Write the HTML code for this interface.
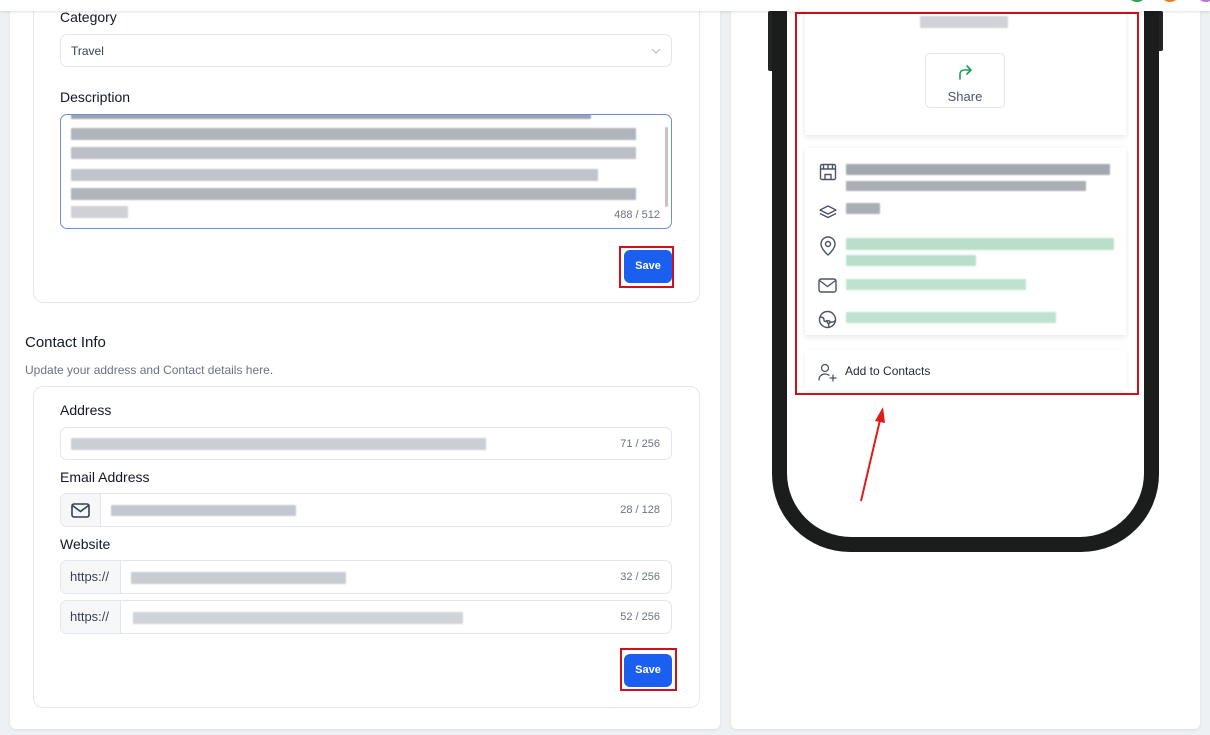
<!DOCTYPE html>
<html><head><meta charset="utf-8"><style>
*{box-sizing:border-box;margin:0;padding:0}
body{width:1210px;height:735px;overflow:hidden;background:#eef1f4;font-family:"Liberation Sans",sans-serif;position:relative;color:#111827}
.abs{position:absolute}
.blur{position:absolute;filter:blur(0.8px);border-radius:1px}
.lbl{position:absolute;font-size:14px;color:#111827}
.inp{position:absolute;left:60px;width:612px;border:1px solid #e3e6ea;border-radius:7px;background:#fff}
.cnt{position:absolute;right:11px;font-size:11px;color:#6b7280;top:50%;transform:translateY(-50%)}
.save{position:absolute;width:48px;height:33px;background:#1a5ff0;border-radius:6px;color:#fff;font-size:11px;font-weight:bold;text-align:center;line-height:33px}
.red{position:absolute;border:2px solid #d0111b}
.addon{position:absolute;left:0;top:0;bottom:0;background:#f6f7f9;border-right:1px solid #e3e6ea;border-radius:7px 0 0 7px;font-size:13px;color:#374151;line-height:32px;padding-left:9px}
svg.ic{position:absolute}
</style></head><body>
<div class="abs" style="left:0;top:0;width:1210px;height:11px;background:#fff;box-shadow:0 1px 3px rgba(0,0,0,.12);z-index:5"></div>
<div class="abs" style="left:1127px;top:-18px;width:20px;height:20px;border-radius:50%;background:#2ea44f;z-index:6"></div>
<div class="abs" style="left:1160px;top:-18px;width:20px;height:20px;border-radius:50%;background:#f47a20;z-index:6"></div>
<div class="abs" style="left:1196px;top:-18px;width:20px;height:20px;border-radius:50%;background:#b47ad6;z-index:6"></div>

<!-- left panel -->
<div class="abs" style="left:10px;top:0;width:710px;height:729px;background:#fff;border-radius:0 0 6px 6px;box-shadow:0 1px 3px rgba(0,0,0,.08)"></div>
<div class="abs" style="left:33px;top:-10px;width:667px;height:313px;border:1px solid #e5e7eb;border-radius:10px"></div>
<div class="lbl" style="left:60px;top:9px">Category</div>
<div class="inp" style="top:34px;height:33px"><span style="position:absolute;left:10px;top:9px;font-size:12px;color:#374151">Travel</span>
<svg class="ic" style="right:10px;top:11px" width="10" height="10" viewBox="0 0 10 10"><path d="M1 3l4 4 4-4" fill="none" stroke="#b8bcc4" stroke-width="1"/></svg></div>
<div class="lbl" style="left:60px;top:89px">Description</div>
<div class="inp" style="top:114px;height:115px;border-color:#6c8fd8;overflow:hidden">
<div class="blur" style="left:10px;top:-5px;width:520px;height:9px;background:#9ca3af"></div>
<div class="blur" style="left:10px;top:13px;width:565px;height:12px;background:#b0b4bb"></div>
<div class="blur" style="left:10px;top:32px;width:565px;height:12px;background:#bcc0c6"></div>
<div class="blur" style="left:10px;top:54px;width:527px;height:12px;background:#c0c3c9"></div>
<div class="blur" style="left:10px;top:73px;width:565px;height:12px;background:#b0b4bb"></div>
<div class="blur" style="left:10px;top:91px;width:57px;height:12px;background:#cfd1d5"></div>
<div class="abs" style="right:3px;top:12px;width:3px;height:80px;background:#c4c4c4;border-radius:2px"></div>
<span style="position:absolute;right:11px;top:94px;font-size:11px;color:#6b7280">488 / 512</span>
</div>
<div class="save" style="left:624px;top:250px">Save</div>
<div class="red" style="left:619px;top:246px;width:55px;height:42px"></div>

<div class="abs" style="left:25px;top:334px;font-size:15px;color:#111827">Contact Info</div>
<div class="abs" style="left:25px;top:363px;font-size:12px;color:#6b7280">Update your address and Contact details here.</div>
<div class="abs" style="left:33px;top:386px;width:667px;height:322px;border:1px solid #e5e7eb;border-radius:10px"></div>
<div class="lbl" style="left:60px;top:402px">Address</div>
<div class="inp" style="top:427px;height:33px"><div class="blur" style="left:10px;top:10px;width:415px;height:12px;background:#cbced3"></div><span class="cnt">71 / 256</span></div>
<div class="lbl" style="left:60px;top:469px">Email Address</div>
<div class="inp" style="top:493px;height:34px"><div class="addon" style="width:40px"></div>
<svg class="ic" style="left:10px;top:9px" width="19" height="15" viewBox="0 0 19 15"><rect x="1" y="1" width="17" height="13" rx="2" fill="none" stroke="#374151" stroke-width="1.6"/><path d="M1.5 2.5l8 6 8-6" fill="none" stroke="#374151" stroke-width="1.6"/></svg>
<div class="blur" style="left:50px;top:11px;width:185px;height:11px;background:#c4c7cd"></div><span class="cnt">28 / 128</span></div>
<div class="lbl" style="left:60px;top:536px">Website</div>
<div class="inp" style="top:560px;height:34px"><div class="addon" style="width:60px">https://</div><div class="blur" style="left:70px;top:11px;width:215px;height:12px;background:#c8cbd0"></div><span class="cnt">32 / 256</span></div>
<div class="inp" style="top:600px;height:34px"><div class="addon" style="width:60px">https://</div><div class="blur" style="left:72px;top:11px;width:330px;height:12px;background:#d0d3d8"></div><span class="cnt">52 / 256</span></div>
<div class="save" style="left:624px;top:654px">Save</div>
<div class="red" style="left:620px;top:648px;width:57px;height:43px"></div>

<!-- right panel -->
<div class="abs" style="left:731px;top:0;width:469px;height:729px;background:#fff;border-radius:0 0 6px 6px;box-shadow:0 1px 3px rgba(0,0,0,.08)"></div>
<div class="abs" style="left:768px;top:11px;width:6px;height:60px;background:#222;border-radius:2px"></div>
<div class="abs" style="left:1157px;top:11px;width:6px;height:40px;background:#222;border-radius:2px"></div>
<div class="abs" style="left:772px;top:-100px;width:387px;height:652px;background:#1b1c1c;border-radius:0 0 78px 78px"></div>
<div class="abs" style="left:787px;top:-100px;width:357px;height:637px;background:#fff;border-radius:0 0 64px 64px"></div>

<div class="abs" style="left:805px;top:0;width:321px;height:135px;background:#fff;box-shadow:0 2px 6px rgba(0,0,0,.1)"></div>
<div class="blur" style="left:920px;top:16px;width:88px;height:12px;background:#d0d2d6"></div>
<div class="abs" style="left:925px;top:53px;width:80px;height:55px;border:1px solid #e3e6ea;border-radius:5px;text-align:center">
<svg style="display:block;margin:10px auto 0" width="16" height="16" viewBox="0 0 16 16"><path d="M3 15V10a4 4 0 0 1 4-4h7M10 2l4 4-4 4" fill="none" stroke="#1f9a5c" stroke-width="1.6" stroke-linecap="round" stroke-linejoin="round"/></svg>
<div style="font-size:13px;color:#4b5563;margin-top:9px">Share</div></div>

<div class="abs" style="left:805px;top:148px;width:321px;height:187px;background:#fff;box-shadow:0 2px 6px rgba(0,0,0,.1)"></div>
<svg class="ic" style="left:819px;top:163px" width="18" height="18" viewBox="0 0 18 18" fill="none" stroke="#4b5563" stroke-width="1.4"><rect x="1.5" y="1.5" width="15" height="15" rx="1.5"/><path d="M1.5 6h15M6 16.5v-5h6v5M4.5 6v-4.5M9 6V1.5M13.5 6V1.5"/></svg>
<div class="blur" style="left:846px;top:164px;width:264px;height:11px;background:#a3a8b0"></div>
<div class="blur" style="left:846px;top:181px;width:240px;height:10px;background:#a9aeb5"></div>
<svg class="ic" style="left:818px;top:204px" width="20" height="16" viewBox="0 0 20 16" fill="none" stroke="#4b5563" stroke-width="1.4" stroke-linejoin="round"><path d="M10 2l8 4-8 4-8-4z"/><path d="M2 9.5l8 4 8-4"/></svg>
<div class="blur" style="left:846px;top:203px;width:34px;height:11px;background:#a9aeb5"></div>
<svg class="ic" style="left:819px;top:236px" width="18" height="20" viewBox="0 0 18 20" fill="none" stroke="#4b5563" stroke-width="1.4"><path d="M9 19s7-6 7-11A7 7 0 0 0 2 8c0 5 7 11 7 11z"/><circle cx="9" cy="8" r="2.5"/></svg>
<div class="blur" style="left:846px;top:238px;width:268px;height:12px;background:#b9dfca"></div>
<div class="blur" style="left:846px;top:255px;width:130px;height:11px;background:#b9dfca"></div>
<svg class="ic" style="left:818px;top:278px" width="19" height="15" viewBox="0 0 19 15" fill="none" stroke="#4b5563" stroke-width="1.4"><rect x="1" y="1" width="17" height="13" rx="2"/><path d="M1.5 2.5l8 6 8-6"/></svg>
<div class="blur" style="left:846px;top:279px;width:180px;height:11px;background:#bfe2cf"></div>
<svg class="ic" style="left:818px;top:310px" width="19" height="19" viewBox="0 0 19 19" fill="none" stroke="#4b5563" stroke-width="1.4"><circle cx="9.5" cy="9.5" r="8"/><path d="M2 7c3 0 4 1 4 3s2 2 3 0M11 17c-1-3 0-5 3-5 2 0 3-1 3-2"/><circle cx="10.5" cy="12" r="1.3"/></svg>
<div class="blur" style="left:846px;top:312px;width:210px;height:11px;background:#bfe2cf"></div>

<div class="abs" style="left:805px;top:350px;width:321px;height:40px;background:#fff;box-shadow:0 2px 6px rgba(0,0,0,.06)"></div>
<svg class="ic" style="left:818px;top:362px" width="20" height="20" viewBox="0 0 20 20" fill="none" stroke="#4b5563" stroke-width="1.3" stroke-linecap="round"><circle cx="7" cy="6" r="3.5"/><path d="M1 18c0-4 3-6 6-6 2 0 3 .5 4 1.2M15 13v6M12 16h6"/></svg>
<div class="abs" style="left:845px;top:364px;font-size:12px;color:#1f2937">Add to Contacts</div>

<div class="red" style="left:795px;top:12px;width:344px;height:383px"></div>
<svg class="abs" style="left:0;top:0" width="1210" height="735"><path d="M861 501L880 420" stroke="#e01b1b" stroke-width="2"/><path d="M883 407l-8 14 10 2z" fill="#e01b1b"/></svg>
</body></html>
